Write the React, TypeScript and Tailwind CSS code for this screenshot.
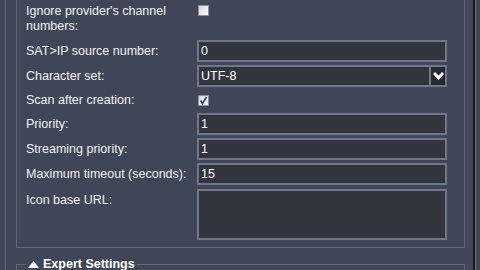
import React from 'react'

// Form rows for the source settings panel
const labelCls = "w-[171px] shrink-0 text-[12.5px] leading-[15px] text-[#f2f2f2]"
const inputCls = "w-[250px] h-[22px] border-2 border-[#6f7789] bg-[#32353d] px-[2px] text-[12.5px] leading-[18px] text-white"

const CheckBox = ({ checked }: { checked?: boolean }) => (
  <div className="w-[11px] h-[11px] border border-[#8c8f96] bg-gradient-to-br from-[#d6d8dc] to-[#fbfbfb] flex items-center justify-center">
    {checked && (
      <svg width="9" height="9" viewBox="0 0 9 9">
        <path d="M1.5 4.5 L3.5 7.5 L7.5 1" stroke="#2c3f8c" strokeWidth="1.6" fill="none" />
      </svg>
    )}
  </div>
)

const TextRow = ({ label, value }: { label: string; value: string }) => (
  <div className="flex items-center h-[22px]">
    <div className={labelCls}>{label}</div>
    <div className={inputCls}>{value}</div>
  </div>
)

export default function App() {
  return (
    <div className="w-[480px] h-[270px] overflow-hidden bg-[#3f4657] flex" style={{ fontFamily: '"Liberation Sans", Arial, sans-serif' }}>
      <div className="ml-[5px] w-[470px] h-full border-l border-[#5e6677] border-r-2 border-r-[#16181d]">
        {/* main settings fieldset, top edge scrolled out of view */}
        <div className="ml-[10px] w-[449px] border-x border-b border-[#5f6779] pl-[9px] pt-[4px] pb-[6px] flex flex-col gap-[3px]">
          <div className="flex items-start h-[33px]">
            <div className={labelCls}>Ignore provider's channel<br />numbers:</div>
            <div className="pt-[1px] pl-[1px]"><CheckBox /></div>
          </div>
          <TextRow label="SAT>IP source number:" value="0" />
          <div className="flex items-center h-[22px]">
            <div className={labelCls}>Character set:</div>
            <div className="w-[250px] h-[22px] border-2 border-[#6f7789] bg-[#32353d] flex">
              <div className="flex-1 px-[2px] text-[12.5px] leading-[18px] text-white">UTF-8</div>
              <div className="w-[16px] h-full border-l-2 border-[#6f7789] bg-[#262930] flex items-center justify-center">
                <svg width="11" height="9" viewBox="0 0 11 9">
                  <path d="M0 2 L2 0 L5.5 3.5 L9 0 L11 2 L5.5 8 Z" fill="#ffffff" />
                </svg>
              </div>
            </div>
          </div>
          <div className="flex items-center h-[20px]">
            <div className={labelCls}>Scan after creation:</div>
            <div className="pl-[1px]"><CheckBox checked /></div>
          </div>
          <TextRow label="Priority:" value="1" />
          <TextRow label="Streaming priority:" value="1" />
          <TextRow label="Maximum timeout (seconds):" value="15" />
          <div className="flex items-start h-[52px] mt-[1px]">
            <div className={labelCls + " pt-[4px]"}>Icon base URL:</div>
            <div className="w-[250px] h-[51px] border-2 border-[#6f7789] bg-[#32353d]" />
          </div>
        </div>

        {/* collapsed expert section */}
        <fieldset className="ml-[10px] mt-[9px] w-[449px] h-[40px] border border-[#5f6779]">
          <legend className="ml-[9px] px-[2px] flex items-center gap-[4px] text-[12.5px] leading-[15px] font-bold text-white">
            <svg width="11" height="7" viewBox="0 0 11 7">
              <path d="M5.5 0 L11 7 L0 7 Z" fill="#ffffff" />
            </svg>
            Expert Settings
          </legend>
        </fieldset>
      </div>
      <div className="w-[1px] h-full bg-[#6a7283]" />
    </div>
  )
}
